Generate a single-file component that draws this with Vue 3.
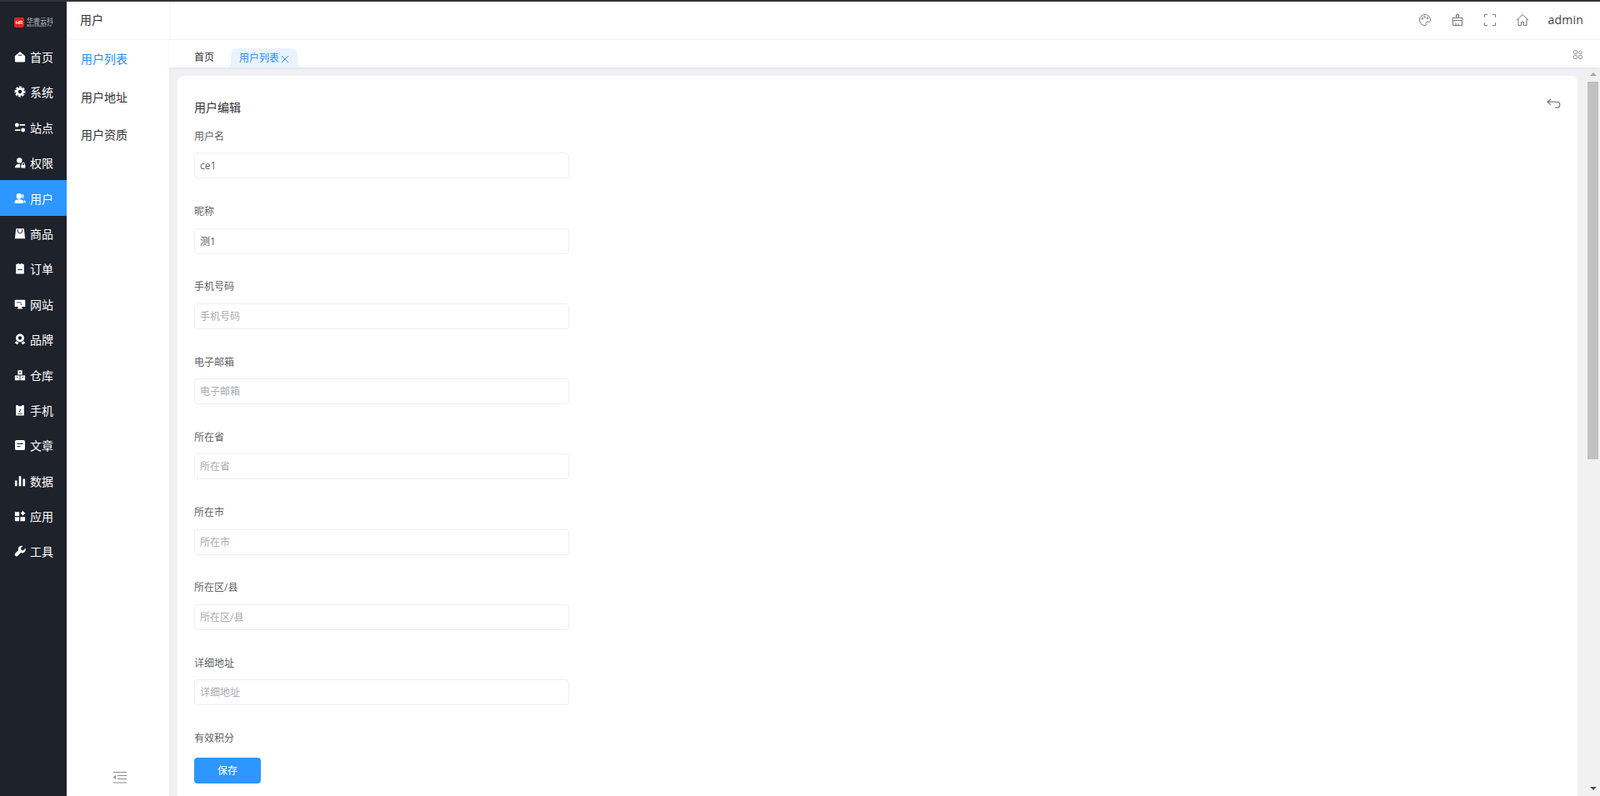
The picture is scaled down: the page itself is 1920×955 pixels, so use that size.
<template>
  <div class="layout">
    <aside class="side">
      <div class="logo">
        <span class="logo-mark">HR</span>
        <div class="logo-text">
          <span class="logo-name">华睿云科</span>
          <span class="logo-sub">精品企业级云服务平台</span>
        </div>
      </div>
      <div
        v-for="item in menus"
        :key="item.name"
        class="side-item"
        :class="{ active: item.name === '用户' }"
      >
        <svg class="side-icon" viewBox="0 0 16 16"><path :d="item.icon" fill="#fff" fill-rule="evenodd" /></svg>
        <span>{{ item.name }}</span>
      </div>
    </aside>

    <nav class="sub">
      <div class="sub-title">用户</div>
      <a v-for="(s, i) in subMenus" :key="s" class="sub-item" :class="{ current: i === 0 }">{{ s }}</a>
      <div class="sub-foot">
        <svg width="16" height="14" viewBox="0 0 16 14" fill="none" stroke="#8a8a8a">
          <path d="M0 .5h16M5 4.500h11M5 8.500h11M0 13h16" stroke-width="1.100" />
          <path d="M0 6.500 3 4v5z" fill="#8a8a8a" stroke="none" />
        </svg>
      </div>
    </nav>

    <div class="main">
      <header class="head">
        <svg class="head-icon" viewBox="0 0 16 16" fill="none" stroke="#777" stroke-width="1">
          <path d="M8 1.500a6.500 6.500 0 1 0 0 13c1.600 0 1.700-1.200 1.200-2-.6-1 0-2.200 1.300-2.200h2.200c1.200 0 1.800-.8 1.800-2.300C14.500 4 11.500 1.500 8 1.500z" />
          <circle cx="4.700" cy="6.500" r=".9" />
          <circle cx="7.500" cy="4.300" r=".9" />
          <circle cx="11" cy="5.600" r=".9" />
        </svg>
        <svg class="head-icon" viewBox="0 0 16 16" fill="none" stroke="#777" stroke-width="1">
          <path d="M6.500 5.500V1.500h3v4M2 5.500h12v3H2zM2.500 8.500v6h11v-6M6 14.500v-3M9 14.500v-2" />
        </svg>
        <svg class="head-icon" viewBox="0 0 16 16" fill="none" stroke="#888" stroke-width="1.200">
          <path d="M1.500 5V1.500H5M11 1.500h3.500V5M14.500 11v3.500H11M5 14.500H1.500V11" />
        </svg>
        <svg class="head-icon" viewBox="0 0 16 16" fill="none" stroke="#777" stroke-width="1">
          <path d="M1 8.200 8 1.500l7 6.700M3 6.500v8h3.500v-4h3v4H13v-8" />
        </svg>
        <span class="admin">admin</span>
      </header>

      <div class="tabs">
        <span class="tab">首页</span>
        <span class="tab on">
          用户列表
          <svg class="tab-x" viewBox="0 0 10 10" fill="none" stroke="#2d8cf0" stroke-width="1">
            <path d="M1 1l8 8M9 1l-8 8" />
          </svg>
        </span>
        <svg class="tab-more" viewBox="0 0 12 12" fill="none" stroke="#777" stroke-width=".9">
          <rect x=".6" y=".6" width="4.400" height="4.400" rx="1" />
          <path d="M9 .5 11.500 3 9 5.500 6.500 3z" />
          <rect x=".6" y="7" width="4.400" height="4.400" rx="1" />
          <rect x="7" y="7" width="4.400" height="4.400" rx="1" />
        </svg>
      </div>

      <div class="body">
        <div class="page">
          <section class="card">
            <div class="card-top">
              <h3>用户编辑</h3>
              <svg class="back" width="17" height="13" viewBox="0 0 17 13" fill="none" stroke="#6b6b7b" stroke-width="1.100">
                <path d="M5 .8 1 4.300l4 3.400M1 4.300h11c2.200 0 3.800 1.400 3.800 3.400s-1.600 3.600-3.800 3.600H10" />
              </svg>
            </div>
            <div v-for="f in fields" :key="f.label" class="field">
              <label>{{ f.label }}</label>
              <input type="text" :value="f.value" :placeholder="f.label" readonly>
            </div>
            <div class="field last"><label>有效积分</label></div>
            <button type="button" class="save">保存</button>
          </section>
        </div>
        <div class="scrollbar">
          <span class="arrow up"></span>
          <span class="thumb"></span>
          <span class="arrow down"></span>
        </div>
      </div>
    </div>
  </div>
</template>

<script setup>
import { ref } from 'vue'

// 齿轮图标按角度算出来
const gear = () => {
  let d = ''
  for (let i = 0; i < 8; i++) {
    const a = (i * Math.PI) / 4
    const pts = [[7.6, -0.26], [7.6, 0.26], [5.6, 0.42], [5.6, 0.75]]
    pts.forEach(([r, t], j) => {
      const x = (8 + r * Math.cos(a + t)).toFixed(2)
      const y = (8 + r * Math.sin(a + t)).toFixed(2)
      d += (i === 0 && j === 0 ? 'M' : 'L') + x + ' ' + y
    })
  }
  return d + 'zM5.500 8a2.500 2.500 0 1 0 5 0a2.500 2.500 0 1 0-5 0z'
}

const menus = ref([
  { name: '首页', icon: 'M8 1 15 7v7a1.500 1.500 0 0 1-1.500 1.500h-11A1.500 1.500 0 0 1 1 14V7zM5.500 5.500v1h5v-1z' },
  { name: '系统', icon: gear() },
  { name: '站点', icon: 'M1 4.500a2.800 2.800 0 1 0 5.600 0a2.800 2.800 0 1 0-5.600 0zM7.500 3.500h7.500v2H7.500zM9.400 11.500a2.800 2.800 0 1 0 5.600 0a2.800 2.800 0 1 0-5.600 0zM1 10.500h7.500v2H1z' },
  { name: '权限', icon: 'M3.500 5a3.700 3.700 0 1 0 7.400 0a3.700 3.700 0 1 0-7.400 0zM1 15c0-3.200 2.500-5 5.500-5 .6 0 1.200.1 1.700.2V15zM9.500 11h.7V10a2.200 2.200 0 0 1 4.400 0v1h.7v4.500H9.500zM11.200 11h2.400V10a1.200 1.200 0 0 0-2.400 0z' },
  { name: '用户', icon: 'M3 5a3.800 3.800 0 1 0 7.600 0a3.800 3.800 0 1 0-7.600 0zM.5 13.300c0-2.400 2.800-3.800 6.300-3.800s6.300 1.400 6.300 3.800c0 1-1 1.500-2 1.500H2.500c-1 0-2-.5-2-1.500zM11.300 1.700a3.800 3.800 0 0 1 0 6.600zM13 9.700c1.600.6 2.700 1.800 2.700 3.300 0 .8-.6 1.300-1.500 1.400z' },
  { name: '商品', icon: 'M2.500 1.500h11l1.500 13.500H1zM4.500 2.500v2a3.500 3.500 0 0 0 7 0v-2h-1v2a2.500 2.500 0 0 1-5 0v-2z' },
  { name: '订单', icon: 'M5 2V1h1.500v1h3V1H11v1h1.500a1 1 0 0 1 1 1v11.500a1 1 0 0 1-1 1h-9a1 1 0 0 1-1-1V3a1 1 0 0 1 1-1zM5 9v1.200h6V9z' },
  { name: '网站', icon: 'M1.500 2h13a.7.7 0 0 1 .7.7v8.100a.7.7 0 0 1-.7.7H10.500v1.500h1v1.200h-7v-1.200h1v-1.500H1.500a.7.7 0 0 1-.7-.7V2.700a.7.7 0 0 1 .7-.7zM3 5v1h7V5zM9 7v2.500h1V7z' },
  { name: '品牌', icon: 'M2.300 6.300a5.700 5.700 0 1 0 11.400 0a5.700 5.700 0 1 0-11.400 0zM5.500 6.300a2.500 2.500 0 1 0 5 0a2.500 2.500 0 1 0-5 0zM3 10.500l-2.500 3 2.200.2 1 1.800L6.300 13zM13 10.500l2.500 3-2.200.2-1 1.800L9.700 13z' },
  { name: '仓库', icon: 'M5 1.500h6v6H5zM6.800 3.500v1h2.400v-1zM1 8.500h6.500v6.500H1zM3 10.500v1h2.400v-1zM8.500 8.500H15v6.500H8.500zM10.500 10.500v1h2.400v-1z' },
  { name: '手机', icon: 'M2.500 1h2.500l1 1.500h4L11 1h2.500v14.500h-11zM6.500 7v.8h2L6.500 10v.8h3V10h-2l2-2.200V7zM5 12.500v1h6v-1z' },
  { name: '文章', icon: 'M3 1.200h10A1.800 1.800 0 0 1 14.800 3v10a1.800 1.800 0 0 1-1.800 1.800H3A1.800 1.800 0 0 1 1.200 13V3A1.800 1.800 0 0 1 3 1.200zM4 5.500v1.300h8V5.500zM4 9v1.300h4.500V9z' },
  { name: '数据', icon: 'M1 7.500h3v7.500H1zM6.500 1.500h3V15h-3zM12 5h3v10h-3z' },
  { name: '应用', icon: 'M1 2.500h6v5.500H1zM1 9.500h6V15H1zM8.500 9.500H15V15H8.500zM12 1l3.200 3.200L12 7.400 8.800 4.200z' },
  { name: '工具', icon: 'M15.300 4.300 12.200 7.300 9.800 6.600 9 4.200l3-3a4.600 4.600 0 0 0-6.200 5.700L1.300 11.300a2.500 2.500 0 0 0 3.500 3.500L9.200 10.300a4.600 4.600 0 0 0 6.100-6z' }
])

const subMenus = ref(['用户列表', '用户地址', '用户资质'])

const fields = ref([
  { label: '用户名', value: 'ce1' },
  { label: '昵称', value: '测1' },
  { label: '手机号码', value: '' },
  { label: '电子邮箱', value: '' },
  { label: '所在省', value: '' },
  { label: '所在市', value: '' },
  { label: '所在区/县', value: '' },
  { label: '详细地址', value: '' }
])
</script>

<style>
html, body { margin: 0; height: 100%; overflow: hidden; }
</style>

<style scoped>
* { box-sizing: border-box; }

.layout {
  display: flex;
  height: 955px;
  border-top: 2px solid #333;
  font-family: "Open Sans", "Noto Sans CJK SC", sans-serif;
  color: #303133;
  background: #fff;
  overflow: hidden;
}

.side {
  width: 80px;
  flex: none;
  background: #1e222b;
  color: #fff;
}

.logo {
  height: 44.8px;
  display: flex;
  align-items: center;
  padding: 5px 0 0 17px;
  gap: 3px;
}

.logo-mark {
  width: 12px;
  height: 12px;
  flex: none;
  border-radius: 2px;
  background: #e0201c;
  color: #fff;
  font-size: 6px;
  line-height: 12px;
  text-align: center;
  font-weight: 700;
  font-family: "Liberation Sans", sans-serif;
}

.logo-text {
  display: flex;
  flex-direction: column;
  color: #b9bcc2;
}

.logo-name {
  font-size: 8px;
  line-height: 8px;
  white-space: nowrap;
}

.logo-sub {
  font-size: 3px;
  line-height: 4px;
  white-space: nowrap;
}

.side-item {
  height: 42.4px;
  display: flex;
  align-items: center;
  gap: 5px;
  padding-left: 17px;
  font-size: 14px;
}

.side-item.active {
  background: #2d96ff;
}

.side-icon {
  width: 14px;
  height: 14px;
}

.sub {
  width: 123px;
  flex: none;
  display: flex;
  flex-direction: column;
  box-shadow: 1px 0 4px rgba(0, 0, 0, .04);
  z-index: 1;
}

.sub-title {
  height: 46px;
  padding-left: 16px;
  font-size: 14px;
  line-height: 44px;
  border-bottom: 1px solid #f5f5f5;
}

.sub-item {
  height: 45.5px;
  padding-left: 17px;
  font-size: 14px;
  line-height: 45px;
}

.sub-item.current {
  color: #2d8cf0;
}

.sub-foot {
  margin-top: auto;
  padding: 0 0 15px 56px;
  line-height: 0;
}

.main {
  flex: 1;
  min-width: 0;
  display: flex;
  flex-direction: column;
}

.head {
  height: 46px;
  flex: none;
  display: flex;
  align-items: center;
  justify-content: flex-end;
  gap: 23px;
  padding: 0 20px 2px 0;
  border-bottom: 1px solid #f5f5f5;
}

.head-icon {
  width: 16px;
  height: 16px;
}

.admin {
  font-size: 14px;
  color: #444;
  letter-spacing: .2px;
}

.tabs {
  height: 33px;
  flex: none;
  display: flex;
  align-items: flex-end;
  gap: 10px;
  padding-left: 30px;
  position: relative;
  z-index: 1;
  box-shadow: 0 1px 4px rgba(0, 0, 0, .06);
  background: #fff;
}

.tab {
  position: relative;
  height: 23px;
  padding: 0 10px 0 0;
  font-size: 12px;
  line-height: 22px;
  color: #303133;
}

.tab.on {
  display: flex;
  align-items: center;
  gap: 2px;
  width: 80px;
  padding-left: 10px;
  color: #2d8cf0;
  background: #e8f3ff;
  border-radius: 8px 8px 0 0;
  white-space: nowrap;
}

.tab.on::before,
.tab.on::after {
  content: "";
  position: absolute;
  bottom: 0;
  width: 6px;
  height: 6px;
}

.tab.on::before {
  left: -6px;
  background: radial-gradient(circle at 0 0, transparent 6px, #e8f3ff 6.5px);
}

.tab.on::after {
  right: -6px;
  background: radial-gradient(circle at 100% 0, transparent 6px, #e8f3ff 6.5px);
}

.tab-x {
  width: 10px;
  height: 10px;
  flex: none;
  margin-top: 2px;
}

.tab-more {
  position: absolute;
  right: 21px;
  top: 12px;
  width: 11px;
  height: 11px;
}

.body {
  flex: 1;
  min-height: 0;
  display: flex;
  background: #f1f0f6;
}

.page {
  flex: 1;
  min-width: 0;
  overflow: hidden;
  padding: 10px 10px 0;
}

.card {
  background: #fff;
  border-radius: 8px;
  padding: 28px 20px 30px;
}

.card-top {
  display: flex;
  justify-content: space-between;
  height: 34.3px;
}

.card-top h3 {
  margin: 0;
  font-size: 14px;
  font-weight: 400;
  line-height: 20px;
  color: #303133;
}

.back {
  margin-top: -1px;
}

.field {
  height: 90.3px;
}

.field label {
  display: block;
  font-size: 12px;
  line-height: 20px;
  height: 30px;
  padding-top: .4px;
  color: #606266;
}

.field input {
  display: block;
  width: 450px;
  height: 31px;
  padding: 0 6px;
  border: 1px solid #eeeff1;
  border-radius: 4px;
  font-family: inherit;
  font-size: 12px;
  color: #606266;
  outline: none;
  background: #fff;
}

.field input::placeholder {
  color: #a8abb2;
  opacity: 1;
}

.field.last {
  height: 33.300px;
}

.save {
  display: block;
  width: 80px;
  height: 31px;
  border: 0;
  border-radius: 4px;
  background: #2d96ff;
  color: #fff;
  font-family: inherit;
  font-size: 12px;
}

.scrollbar {
  width: 17px;
  flex: none;
  display: flex;
  flex-direction: column;
  align-items: center;
  background: #f1f1f1;
}

.arrow {
  flex: none;
  width: 0;
  height: 0;
  border-left: 4px solid transparent;
  border-right: 4px solid transparent;
}

.arrow.up {
  margin-top: 6px;
  border-bottom: 4px solid #a3a3a3;
}

.arrow.down {
  margin-top: auto;
  margin-bottom: 7px;
  border-top: 4px solid #505050;
}

.thumb {
  width: 13px;
  height: 453px;
  margin-top: 7px;
  background: #c1c1c1;
}
</style>
